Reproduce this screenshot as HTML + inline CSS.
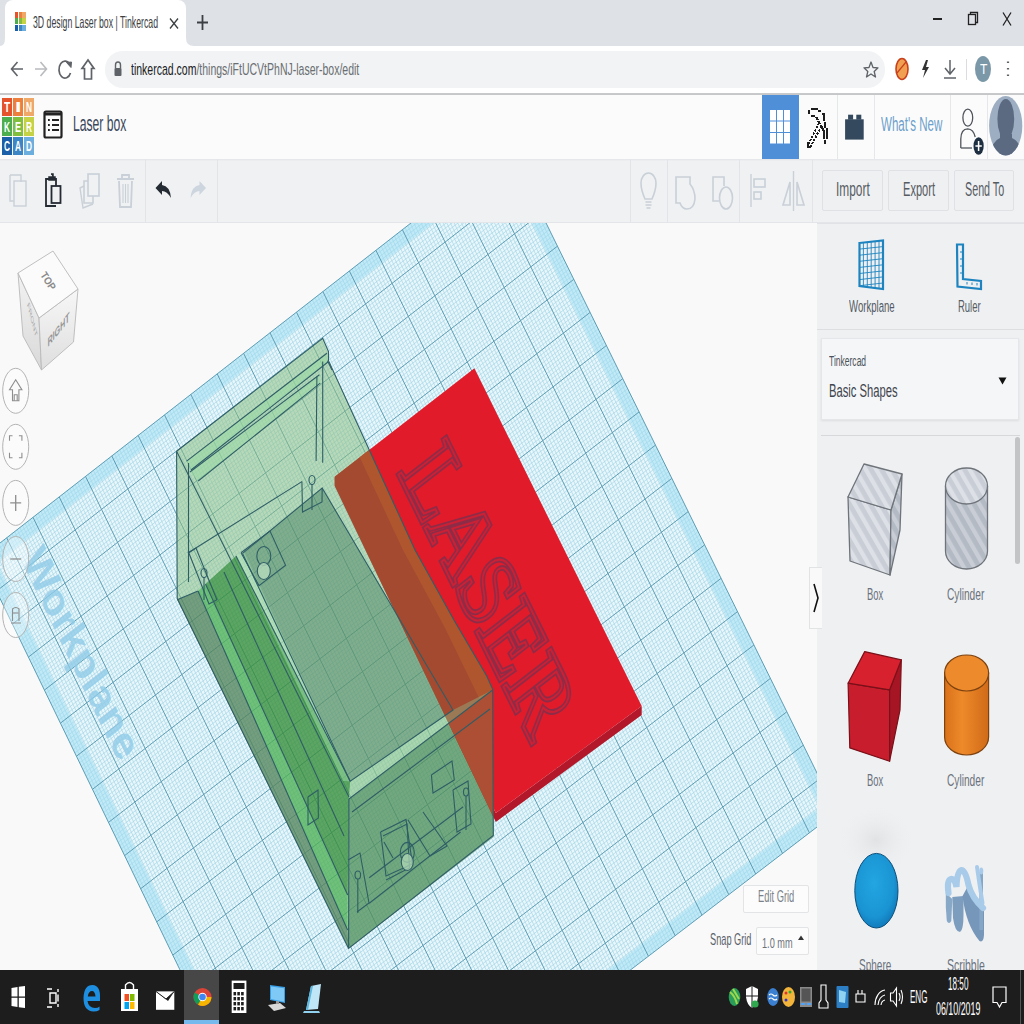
<!DOCTYPE html><html><head><meta charset="utf-8"><style>
*{margin:0;padding:0;box-sizing:border-box}
html,body{width:1024px;height:1024px;overflow:hidden;background:#fff;font-family:"Liberation Sans",sans-serif}
.a{position:absolute}
.t{position:absolute;white-space:nowrap;transform-origin:0 0}
svg{position:absolute;overflow:hidden}
</style></head><body>
<div class="a" style="left:0;top:0;width:1024px;height:46px;background:#dee1e6"></div><div class="a" style="left:5px;top:0;width:181px;height:46px;background:#fff;border-radius:8px 8px 0 0"></div><svg style="left:0;top:30px" width="200" height="16" viewBox="0 30 200 16"><path d="M0 46 Q5 46 5 38 L5 46Z" fill="#fff"/><path d="M186 38 Q186 46 194 46 L186 46Z" fill="#fff"/></svg><div class="a" style="left:15.0px;top:12.0px;width:3.4px;height:6px;background:#e5532d"></div><div class="a" style="left:18.7px;top:12.0px;width:3.4px;height:6px;background:#ed7f3d"></div><div class="a" style="left:22.4px;top:12.0px;width:3.4px;height:6px;background:#f0a868"></div><div class="a" style="left:15.0px;top:18.4px;width:3.4px;height:6px;background:#4cae4f"></div><div class="a" style="left:18.7px;top:18.4px;width:3.4px;height:6px;background:#82be3d"></div><div class="a" style="left:22.4px;top:18.4px;width:3.4px;height:6px;background:#c5d246"></div><div class="a" style="left:15.0px;top:24.8px;width:3.4px;height:6px;background:#1b5fa8"></div><div class="a" style="left:18.7px;top:24.8px;width:3.4px;height:6px;background:#3d86c6"></div><div class="a" style="left:22.4px;top:24.8px;width:3.4px;height:6px;background:#6caedd"></div><div class="t" style="transform:scaleX(0.5365);left:33px;top:13.72px;font-size:16.28px;line-height:16.28px;color:#3c4043;font-weight:normal;font-family:"Liberation Sans", sans-serif;">3D design Laser box | Tinkercad</div><svg style="left:168px;top:17px" width="12" height="13" viewBox="0 0 12 13"><path d="M2 1.5 L10 11.5 M10 1.5 L2 11.5" stroke="#3c4043" stroke-width="1.3" fill="none"/></svg><svg style="left:196px;top:13px" width="13" height="19" viewBox="0 0 13 19"><path d="M6.5 2 V17 M1 9.5 H12" stroke="#3c4043" stroke-width="1.8" fill="none"/></svg><div class="a" style="left:933px;top:18px;width:9px;height:1.5px;background:#222"></div><svg style="left:966px;top:10px" width="14" height="17" viewBox="0 0 14 17"><rect x="2.5" y="4.5" width="7" height="10" fill="none" stroke="#222" stroke-width="1.3"/><path d="M4.5 4.5 V2.5 H11.5 V12.5 H9.5" fill="none" stroke="#222" stroke-width="1.3"/></svg><svg style="left:1000px;top:10px" width="18" height="18" viewBox="0 0 18 18"><path d="M3 2.5 L11 15.5 M11 2.5 L3 15.5" stroke="#222" stroke-width="1.3" fill="none"/></svg><div class="a" style="left:0;top:46px;width:1024px;height:47px;background:#fff"></div><div class="a" style="left:105px;top:51px;width:780px;height:37px;background:#f1f3f4;border-radius:18px"></div><div class="a" style="left:0;top:93px;width:1024px;height:2px;background:#c8c9cb"></div><svg style="left:8px;top:56px" width="92" height="26" viewBox="0 0 92 26"><path d="M15 13 H4 M9.5 6 L3.5 13 L9.5 20" stroke="#5f6368" stroke-width="1.6" fill="none"/><path d="M27 13 H38 M32.5 6 L38.5 13 L32.5 20" stroke="#b9bbbe" stroke-width="1.6" fill="none"/><path d="M62 9 A6 8.5 0 1 0 62.5 17" stroke="#5f6368" stroke-width="1.7" fill="none"/><path d="M58.5 6.5 L63.5 6 L63 11.5Z" fill="#5f6368" stroke="#5f6368" stroke-width="1"/><path d="M80 4 L74 12.5 H76.5 V23 H83.5 V12.5 H86Z" stroke="#5f6368" stroke-width="1.7" fill="none" stroke-linejoin="miter"/></svg><svg style="left:113px;top:60px" width="10" height="18" viewBox="0 0 10 18"><path d="M2.5 8 V5 A2.5 3 0 0 1 7.5 5 V8" stroke="#5f6368" stroke-width="1.4" fill="none"/><rect x="1.5" y="8" width="7" height="8" rx="1" fill="#5f6368"/></svg><div class="t" style="transform:scaleX(0.6129);left:131px;top:61.48px;font-size:17.15px;line-height:17.15px;color:#202124;font-weight:normal;font-family:"Liberation Sans", sans-serif;">tinkercad.com<span style="color:#6a6e72">/things/iFtUCVtPhNJ-laser-box/edit</span></div><svg style="left:863px;top:60px" width="16" height="19" viewBox="0 0 16 19"><path d="M8 2 L10 7.5 L15 7.8 L11.2 11.5 L12.5 17 L8 14 L3.5 17 L4.8 11.5 L1 7.8 L6 7.5Z" stroke="#5f6368" stroke-width="1.3" fill="none" stroke-linejoin="round"/></svg><svg style="left:893px;top:56px" width="125" height="28" viewBox="0 0 125 28"><ellipse cx="9" cy="13" rx="6" ry="10.5" fill="#f0a050" stroke="#c8401c" stroke-width="1.6"/><path d="M4 17 L13 6" stroke="#c8401c" stroke-width="1.2"/><path d="M33 4 L29 14 H32 L30 22 L36 11 H33 L35 4Z" fill="#333"/><path d="M57 4 V17 M52 12 L57 18 L62 12 M51 22 H63" stroke="#5f6368" stroke-width="1.5" fill="none"/><path d="M73.5 3 V24" stroke="#dadce0" stroke-width="1"/><ellipse cx="90" cy="13" rx="8" ry="13" fill="#7b98a8"/><path d="M115 5.5 v1.5 M115 12 v1.5 M115 18.5 v1.5" stroke="#5f6368" stroke-width="2.2"/></svg><div class="t" style="transform:scaleX(0.8750);left:979.5px;top:63.31px;font-size:13.81px;line-height:13.81px;color:#ffffff;font-weight:normal;font-family:"Liberation Sans", sans-serif;">T</div><div class="a" style="left:0;top:95px;width:1024px;height:64px;background:#fbfbfb;box-shadow:0 1px 2px rgba(0,0,0,0.12)"></div><div class="a" style="left:1.8px;top:97.5px;width:10.2px;height:18.6px;background:#e5532d"></div><div class="t" style="transform:scaleX(0.6667);left:4.0px;top:99.18px;font-size:15.26px;line-height:15.26px;color:#fff;font-weight:bold;font-family:"Liberation Sans", sans-serif;">T</div><div class="a" style="left:12.8px;top:97.5px;width:10.2px;height:18.6px;background:#ed7f3d"></div><div class="t" style="transform:scaleX(1.5000);left:15.0px;top:99.18px;font-size:15.26px;line-height:15.26px;color:#fff;font-weight:bold;font-family:"Liberation Sans", sans-serif;">I</div><div class="a" style="left:23.8px;top:97.5px;width:10.2px;height:18.6px;background:#f0a868"></div><div class="t" style="transform:scaleX(0.5455);left:26.0px;top:99.18px;font-size:15.26px;line-height:15.26px;color:#fff;font-weight:bold;font-family:"Liberation Sans", sans-serif;">N</div><div class="a" style="left:1.8px;top:117.0px;width:10.2px;height:18.6px;background:#4cae4f"></div><div class="t" style="transform:scaleX(0.5455);left:4.0px;top:118.68px;font-size:15.26px;line-height:15.26px;color:#fff;font-weight:bold;font-family:"Liberation Sans", sans-serif;">K</div><div class="a" style="left:12.8px;top:117.0px;width:10.2px;height:18.6px;background:#82be3d"></div><div class="t" style="transform:scaleX(0.6000);left:15.0px;top:118.68px;font-size:15.26px;line-height:15.26px;color:#fff;font-weight:bold;font-family:"Liberation Sans", sans-serif;">E</div><div class="a" style="left:23.8px;top:117.0px;width:10.2px;height:18.6px;background:#c5d246"></div><div class="t" style="transform:scaleX(0.5455);left:26.0px;top:118.68px;font-size:15.26px;line-height:15.26px;color:#fff;font-weight:bold;font-family:"Liberation Sans", sans-serif;">R</div><div class="a" style="left:1.8px;top:136.5px;width:10.2px;height:18.6px;background:#1b5fa8"></div><div class="t" style="transform:scaleX(0.5455);left:4.0px;top:138.18px;font-size:15.26px;line-height:15.26px;color:#fff;font-weight:bold;font-family:"Liberation Sans", sans-serif;">C</div><div class="a" style="left:12.8px;top:136.5px;width:10.2px;height:18.6px;background:#3d86c6"></div><div class="t" style="transform:scaleX(0.5455);left:15.0px;top:138.18px;font-size:15.26px;line-height:15.26px;color:#fff;font-weight:bold;font-family:"Liberation Sans", sans-serif;">A</div><div class="a" style="left:23.8px;top:136.5px;width:10.2px;height:18.6px;background:#6caedd"></div><div class="t" style="transform:scaleX(0.5455);left:26.0px;top:138.18px;font-size:15.26px;line-height:15.26px;color:#fff;font-weight:bold;font-family:"Liberation Sans", sans-serif;">D</div><svg style="left:43px;top:110px" width="21" height="30" viewBox="0 0 21 30"><rect x="1.5" y="1.5" width="17" height="26" rx="1.5" fill="none" stroke="#222" stroke-width="2.2"/><path d="M1.5 4 H18.5" stroke="#222" stroke-width="3"/><path d="M5 10 h1.8 M9 10 h7 M5 15 h1.8 M9 15 h7 M5 20 h1.8 M9 20 h7" stroke="#222" stroke-width="2.2"/></svg><div class="t" style="transform:scaleX(0.5573);left:72.5px;top:113.24px;font-size:21.80px;line-height:21.80px;color:#3a475a;font-weight:normal;font-family:"Liberation Sans", sans-serif;">Laser box</div><div class="a" style="left:762px;top:95px;width:36.5px;height:64px;background:#4f8fd8"></div><svg style="left:769px;top:109px" width="23" height="36" viewBox="0 0 23 36"><rect x="1.0" y="1.0" width="6" height="10.5" fill="#fff"/><rect x="8.0" y="1.0" width="6" height="10.5" fill="#fff"/><rect x="15.0" y="1.0" width="6" height="10.5" fill="#fff"/><rect x="1.0" y="12.5" width="6" height="10.5" fill="#fff"/><rect x="8.0" y="12.5" width="6" height="10.5" fill="#fff"/><rect x="15.0" y="12.5" width="6" height="10.5" fill="#fff"/><rect x="1.0" y="24.0" width="6" height="10.5" fill="#fff"/><rect x="8.0" y="24.0" width="6" height="10.5" fill="#fff"/><rect x="15.0" y="24.0" width="6" height="10.5" fill="#fff"/></svg><div class="a" style="left:836.5px;top:95px;width:1px;height:64px;background:#e6e7e9"></div><div class="a" style="left:873.5px;top:95px;width:1px;height:64px;background:#e6e7e9"></div><div class="a" style="left:950px;top:95px;width:1px;height:64px;background:#e6e7e9"></div><div class="a" style="left:987px;top:95px;width:1px;height:64px;background:#e6e7e9"></div><svg style="left:798px;top:98px" width="38" height="60" viewBox="798 98 38 60" shape-rendering="crispEdges"><path d="M810.5 108.5 H817.5 M818 111 H821 M821.5 113.5 H823.5 L823.5 120.5 M824.5 121.5 V127.5 M826.5 128 V139 M825 139.5 V143.5" stroke="#1d1d1d" stroke-width="2" fill="none"/><path d="M808.5 110 V114 M810.5 115.5 H815 M816 117 L818 120 M818 121 L820 124 M821 125 L823.5 130.5 V138.5" stroke="#1d1d1d" stroke-width="2" fill="none"/><path d="M819 123 L807.5 146" stroke="#1d1d1d" stroke-width="1.9" stroke-dasharray="2.2 1.4" fill="none"/><path d="M821.5 126 L810 148" stroke="#1d1d1d" stroke-width="1.9" stroke-dasharray="2.2 1.4" fill="none"/><path d="M808 142 L807.5 147 L811 147" stroke="#1d1d1d" stroke-width="1.8" fill="none"/></svg><svg style="left:840px;top:110px" width="30" height="36" viewBox="840 110 30 36"><rect x="845.1" y="119.3" width="18.6" height="20.3" fill="#34495e"/><rect x="848.1" y="114.7" width="5" height="5" fill="#34495e"/><rect x="856.3" y="114.7" width="5" height="5" fill="#34495e"/></svg><div class="t" style="transform:scaleX(0.5981);left:880.8px;top:115.44px;font-size:19.33px;line-height:19.33px;color:#6d9fcc;font-weight:normal;font-family:"Liberation Sans", sans-serif;">What&#39;s New</div><svg style="left:950px;top:96px" width="74" height="62" viewBox="950 96 74 62"><ellipse cx="967.8" cy="117.7" rx="4.9" ry="8.5" fill="none" stroke="#50555c" stroke-width="1.3"/><path d="M960.8 148 V139 Q961 128.8 967.7 128.8 Q973.5 129 975.2 137" fill="none" stroke="#50555c" stroke-width="1.3"/><path d="M960.8 148 H972" stroke="#50555c" stroke-width="1.3"/><ellipse cx="978.6" cy="146" rx="5.1" ry="8.7" fill="#1f2f42"/><path d="M978.6 141 V151 M975.4 146 H981.8" stroke="#fff" stroke-width="1.5"/><defs><clipPath id="av"><ellipse cx="1005.7" cy="125.7" rx="16.6" ry="29.7"/></clipPath></defs><ellipse cx="1005.7" cy="125.7" rx="16.6" ry="29.7" fill="#9dadc2"/><g clip-path="url(#av)" fill="#5b6a80"><ellipse cx="1005.8" cy="119" rx="8.4" ry="20"/><path d="M1000 134 L1000 138 Q990 142 990 160 H1022 Q1022 142 1012 138 L1012 134Z"/></g></svg><div class="a" style="left:0;top:159px;width:1024px;height:64px;background:#f0f1f3"></div><div class="a" style="left:0;top:159px;width:1024px;height:2px;background:linear-gradient(#e2e4e7,#f0f1f3)"></div><div class="a" style="left:0;top:222px;width:1024px;height:1px;background:#e3e5e8"></div><div class="a" style="left:145px;top:159px;width:1px;height:64px;background:#e2e4e7"></div><div class="a" style="left:217px;top:159px;width:1px;height:64px;background:#e2e4e7"></div><div class="a" style="left:630.3px;top:159px;width:1px;height:64px;background:#e2e4e7"></div><div class="a" style="left:666.8px;top:159px;width:1px;height:64px;background:#e2e4e7"></div><div class="a" style="left:739.4px;top:159px;width:1px;height:64px;background:#e2e4e7"></div><div class="a" style="left:811.8px;top:159px;width:1px;height:64px;background:#e2e4e7"></div><svg style="left:0;top:159px" width="820" height="64" viewBox="0 159 820 64"><path d="M10 175 H21 V182 M10 175 V201 H14" stroke="#c9d0d8" stroke-width="1.4" fill="none"/><rect x="14" y="181" width="12" height="25" fill="none" stroke="#c9d0d8" stroke-width="1.4"/><path d="M52 179 H46 V206 H56" stroke="#252b33" stroke-width="1.8" fill="none"/><path d="M52 179 H56 V186" stroke="#252b33" stroke-width="1.8" fill="none"/><path d="M49 177 H55 V180 H49Z M51 174 H53 V177" stroke="#252b33" stroke-width="1.5" fill="#252b33"/><rect x="51.5" y="186" width="9" height="17" fill="none" stroke="#252b33" stroke-width="1.8"/><rect x="88" y="174" width="11" height="22" fill="none" stroke="#c9d0d8" stroke-width="1.6"/><path d="M88 181 H84 V203 H93 V196" stroke="#c9d0d8" stroke-width="1.6" fill="none"/><path d="M84 186 L80 188 L83 208 L93 204" stroke="#c9d0d8" stroke-width="1.4" fill="none"/><path d="M117 179 H134 M122 179 V175 H129 V179" stroke="#c9d0d8" stroke-width="1.8" fill="none"/><path d="M119 181 L120 207 H131 L132 181" stroke="#c9d0d8" stroke-width="1.8" fill="none"/><path d="M123 184 V203 M125.5 184 V203 M128 184 V203" stroke="#c9d0d8" stroke-width="1.1"/><path d="M155.5 188 L162 181 V185 Q170 186 171 198 Q167 191 162 191 V195Z" fill="#252b33"/><path d="M206 188 L199.5 181 V185 Q191.5 186 190.5 198 Q194.5 191 199.5 191 V195Z" fill="#cdd5de"/><path d="M645 199 Q641 190 641 183 A7.5 10 0 0 1 656 183 Q656 190 652 199Z" stroke="#c9d0d8" stroke-width="1.6" fill="none"/><path d="M645.5 202 H651.5 M645.5 205 H651.5 M646.5 208 H650.5" stroke="#c9d0d8" stroke-width="1.3"/><path d="M676 177 H690 V184 Q695 190 695 199 Q694 209 687 209 Q682 209 680 203 H676Z" stroke="#c9d0d8" stroke-width="1.6" fill="none"/><path d="M724 186 V177 H713 V201 H719" stroke="#c9d0d8" stroke-width="1.6" fill="none"/><ellipse cx="726" cy="198" rx="6.5" ry="11" stroke="#c9d0d8" stroke-width="1.6" fill="none"/><path d="M751 174 V207" stroke="#c9d0d8" stroke-width="1.4"/><rect x="754" y="179" width="11" height="8" fill="none" stroke="#c9d0d8" stroke-width="1.6"/><rect x="754" y="192" width="7" height="7" fill="none" stroke="#c9d0d8" stroke-width="1.6"/><path d="M793.5 171 V211" stroke="#c9d0d8" stroke-width="1.4"/><path d="M790 182 L783 205 H790Z M797 182 L804 205 H797Z" stroke="#c9d0d8" stroke-width="1.6" fill="none"/></svg><div class="a" style="left:822.4px;top:169.8px;width:60.3px;height:41px;background:#eff0f2;border:1px solid #dfe1e4;border-radius:2px"></div><div class="t" style="transform:scaleX(0.5810);left:835.7px;top:179.05px;font-size:20.49px;line-height:20.49px;color:#575c63;font-weight:normal;font-family:"Liberation Sans", sans-serif;">Import</div><div class="a" style="left:887.5px;top:169.8px;width:61.0px;height:41px;background:#eff0f2;border:1px solid #dfe1e4;border-radius:2px"></div><div class="t" style="transform:scaleX(0.5407);left:902.6px;top:179.05px;font-size:20.49px;line-height:20.49px;color:#575c63;font-weight:normal;font-family:"Liberation Sans", sans-serif;">Export</div><div class="a" style="left:953.9px;top:169.8px;width:60.5px;height:41px;background:#eff0f2;border:1px solid #dfe1e4;border-radius:2px"></div><div class="t" style="transform:scaleX(0.5240);left:964.5px;top:179.05px;font-size:20.49px;line-height:20.49px;color:#575c63;font-weight:normal;font-family:"Liberation Sans", sans-serif;">Send To</div><div class="a" style="left:0;top:223px;width:817px;height:748px;background:#f9f9f9"></div><svg style="left:0;top:223px" width="817" height="748" viewBox="0 223 817 748"><polygon points="508.6,147.0 836.3,812.2 302.0,1221.7 -19.5,558.2" fill="#e8f7fb"/><path d="M510.2 150.3L-17.9 561.5M505.9 149.1L833.6 814.3M511.9 153.6L-16.3 564.8M503.3 151.1L830.9 816.3M513.5 156.9L-14.7 568.1M500.6 153.2L828.2 818.4M515.1 160.2L-13.1 571.4M498.0 155.3L825.5 820.4M516.7 163.5L-11.5 574.7M495.3 157.4L822.8 822.5M518.4 166.8L-9.9 578.0M492.6 159.4L820.2 824.6M520.0 170.1L-8.3 581.3M490.0 161.5L817.5 826.6M521.6 173.4L-6.7 584.6M487.3 163.6L814.8 828.7M523.2 176.7L-5.1 587.8M484.7 165.6L812.1 830.8M526.5 183.3L-1.9 594.4M479.4 169.8L806.7 834.9M528.1 186.6L-0.3 597.7M476.7 171.8L804.0 836.9M529.8 189.9L1.3 601.0M474.0 173.9L801.3 839.0M531.4 193.2L2.9 604.3M471.4 176.0L798.7 841.1M533.0 196.6L4.4 607.6M468.7 178.0L796.0 843.1M534.6 199.9L6.0 610.9M466.1 180.1L793.3 845.2M536.3 203.2L7.6 614.2M463.4 182.2L790.6 847.2M537.9 206.5L9.2 617.5M460.8 184.2L787.9 849.3M539.5 209.8L10.8 620.8M458.1 186.3L785.2 851.4M542.8 216.4L14.0 627.4M452.8 190.4L779.8 855.5M544.4 219.7L15.6 630.7M450.1 192.5L777.2 857.5M546.0 223.0L17.2 634.0M447.5 194.6L774.5 859.6M547.7 226.3L18.8 637.3M444.8 196.7L771.8 861.6M549.3 229.6L20.4 640.6M442.2 198.7L769.1 863.7M550.9 232.9L22.0 643.9M439.5 200.8L766.4 865.8M552.6 236.2L23.6 647.2M436.9 202.9L763.7 867.8M554.2 239.5L25.2 650.5M434.2 204.9L761.0 869.9M555.8 242.8L26.8 653.8M431.6 207.0L758.4 871.9M559.1 249.5L30.0 660.4M426.3 211.1L753.0 876.1M560.7 252.8L31.6 663.7M423.6 213.2L750.3 878.1M562.3 256.1L33.2 667.0M420.9 215.2L747.6 880.2M564.0 259.4L34.8 670.3M418.3 217.3L744.9 882.2M565.6 262.7L36.4 673.6M415.6 219.4L742.2 884.3M567.2 266.0L38.0 676.9M413.0 221.4L739.6 886.3M568.9 269.3L39.6 680.2M410.3 223.5L736.9 888.4M570.5 272.6L41.2 683.5M407.7 225.6L734.2 890.5M572.1 275.9L42.8 686.8M405.0 227.6L731.5 892.5M575.4 282.6L46.0 693.4M399.7 231.8L726.1 896.6M577.0 285.9L47.6 696.7M397.1 233.8L723.5 898.7M578.6 289.2L49.2 700.0M394.4 235.9L720.8 900.7M580.3 292.5L50.8 703.3M391.8 238.0L718.1 902.8M581.9 295.8L52.4 706.6M389.1 240.0L715.4 904.8M583.5 299.1L54.0 709.9M386.5 242.1L712.7 906.9M585.2 302.4L55.6 713.3M383.8 244.2L710.1 909.0M586.8 305.8L57.2 716.6M381.2 246.2L707.4 911.0M588.4 309.1L58.8 719.9M378.5 248.3L704.7 913.1M591.7 315.7L62.0 726.5M373.2 252.4L699.3 917.2M593.3 319.0L63.6 729.8M370.6 254.5L696.6 919.2M595.0 322.3L65.2 733.1M367.9 256.5L694.0 921.3M596.6 325.6L66.8 736.4M365.3 258.6L691.3 923.3M598.2 329.0L68.4 739.7M362.6 260.7L688.6 925.4M599.9 332.3L70.0 743.0M360.0 262.7L685.9 927.4M601.5 335.6L71.6 746.3M357.3 264.8L683.2 929.5M603.1 338.9L73.3 749.6M354.7 266.8L680.6 931.6M604.8 342.2L74.9 752.9M352.0 268.9L677.9 933.6M608.0 348.8L78.1 759.5M346.7 273.0L672.5 937.7M609.7 352.2L79.7 762.8M344.1 275.1L669.9 939.8M611.3 355.5L81.3 766.2M341.4 277.2L667.2 941.8M612.9 358.8L82.9 769.5M338.8 279.2L664.5 943.9M614.6 362.1L84.5 772.8M336.1 281.3L661.8 945.9M616.2 365.4L86.1 776.1M333.5 283.3L659.1 948.0M617.8 368.8L87.7 779.4M330.9 285.4L656.5 950.0M619.5 372.1L89.3 782.7M328.2 287.5L653.8 952.1M621.1 375.4L90.9 786.0M325.6 289.5L651.1 954.1M624.4 382.0L94.1 792.6M320.3 293.6L645.8 958.2M626.0 385.3L95.7 795.9M317.6 295.7L643.1 960.3M627.7 388.7L97.3 799.3M315.0 297.8L640.4 962.3M629.3 392.0L98.9 802.6M312.3 299.8L637.7 964.4M630.9 395.3L100.5 805.9M309.7 301.9L635.0 966.4M632.6 398.6L102.1 809.2M307.0 303.9L632.4 968.5M634.2 401.9L103.7 812.5M304.4 306.0L629.7 970.5M635.8 405.3L105.3 815.8M301.8 308.1L627.0 972.6M637.5 408.6L106.9 819.1M299.1 310.1L624.3 974.6M640.7 415.2L110.1 825.7M293.8 314.2L619.0 978.8M642.4 418.5L111.7 829.1M291.2 316.3L616.3 980.8M644.0 421.9L113.4 832.4M288.5 318.4L613.6 982.9M645.6 425.2L115.0 835.7M285.9 320.4L611.0 984.9M647.3 428.5L116.6 839.0M283.2 322.5L608.3 987.0M648.9 431.8L118.2 842.3M280.6 324.5L605.6 989.0M650.6 435.2L119.8 845.6M278.0 326.6L602.9 991.0M652.2 438.5L121.4 848.9M275.3 328.6L600.3 993.1M653.8 441.8L123.0 852.3M272.7 330.7L597.6 995.1M657.1 448.5L126.2 858.9M267.4 334.8L592.3 999.2M658.7 451.8L127.8 862.2M264.7 336.9L589.6 1001.3M660.4 455.1L129.4 865.5M262.1 338.9L586.9 1003.3M662.0 458.4L131.0 868.8M259.5 341.0L584.2 1005.4M663.7 461.7L132.6 872.2M256.8 343.0L581.6 1007.4M665.3 465.1L134.2 875.5M254.2 345.1L578.9 1009.5M666.9 468.4L135.8 878.8M251.5 347.2L576.2 1011.5M668.6 471.7L137.4 882.1M248.9 349.2L573.5 1013.6M670.2 475.0L139.1 885.4M246.3 351.3L570.9 1015.6M673.5 481.7L142.3 892.1M241.0 355.4L565.5 1019.7M675.1 485.0L143.9 895.4M238.3 357.4L562.9 1021.8M676.8 488.4L145.5 898.7M235.7 359.5L560.2 1023.8M678.4 491.7L147.1 902.0M233.1 361.5L557.5 1025.9M680.0 495.0L148.7 905.3M230.4 363.6L554.8 1027.9M681.7 498.3L150.3 908.6M227.8 365.7L552.2 1030.0M683.3 501.7L151.9 912.0M225.1 367.7L549.5 1032.0M685.0 505.0L153.5 915.3M222.5 369.8L546.8 1034.1M686.6 508.3L155.1 918.6M219.9 371.8L544.2 1036.1M689.9 515.0L158.4 925.2M214.6 375.9L538.8 1040.2M691.5 518.3L160.0 928.6M211.9 378.0L536.2 1042.2M693.2 521.6L161.6 931.9M209.3 380.0L533.5 1044.3M694.8 525.0L163.2 935.2M206.7 382.1L530.8 1046.3M696.4 528.3L164.8 938.5M204.0 384.1L528.1 1048.4M698.1 531.6L166.4 941.8M201.4 386.2L525.5 1050.4M699.7 535.0L168.0 945.2M198.8 388.3L522.8 1052.5M701.4 538.3L169.6 948.5M196.1 390.3L520.1 1054.5M703.0 541.6L171.2 951.8M193.5 392.4L517.5 1056.6M706.3 548.3L174.4 958.5M188.2 396.5L512.1 1060.6M707.9 551.6L176.1 961.8M185.6 398.5L509.5 1062.7M709.6 554.9L177.7 965.1M182.9 400.6L506.8 1064.7M711.2 558.3L179.3 968.4M180.3 402.6L504.1 1066.8M712.8 561.6L180.9 971.7M177.7 404.7L501.5 1068.8M714.5 564.9L182.5 975.1M175.0 406.7L498.8 1070.9M716.1 568.3L184.1 978.4M172.4 408.8L496.1 1072.9M717.8 571.6L185.7 981.7M169.8 410.8L493.5 1075.0M719.4 574.9L187.3 985.0M167.1 412.9L490.8 1077.0M722.7 581.6L190.6 991.7M161.9 417.0L485.5 1081.1M724.3 584.9L192.2 995.0M159.2 419.0L482.8 1083.1M726.0 588.3L193.8 998.3M156.6 421.1L480.1 1085.2M727.6 591.6L195.4 1001.7M153.9 423.1L477.5 1087.2M729.3 594.9L197.0 1005.0M151.3 425.2L474.8 1089.3M730.9 598.3L198.6 1008.3M148.7 427.2L472.1 1091.3M732.6 601.6L200.2 1011.6M146.0 429.3L469.5 1093.3M734.2 604.9L201.8 1015.0M143.4 431.3L466.8 1095.4M735.8 608.3L203.4 1018.3M140.8 433.4L464.2 1097.4M739.1 614.9L206.7 1025.0M135.5 437.5L458.8 1101.5M740.8 618.3L208.3 1028.3M132.9 439.5L456.2 1103.5M742.4 621.6L209.9 1031.6M130.2 441.6L453.5 1105.6M744.1 625.0L211.5 1034.9M127.6 443.6L450.8 1107.6M745.7 628.3L213.1 1038.3M125.0 445.7L448.2 1109.7M747.3 631.6L214.7 1041.6M122.4 447.7L445.5 1111.7M749.0 635.0L216.3 1044.9M119.7 449.8L442.9 1113.7M750.6 638.3L218.0 1048.3M117.1 451.8L440.2 1115.8M752.3 641.6L219.6 1051.6M114.5 453.9L437.5 1117.8M755.6 648.3L222.8 1058.2M109.2 458.0L432.2 1121.9M757.2 651.7L224.4 1061.6M106.6 460.0L429.5 1124.0M758.9 655.0L226.0 1064.9M103.9 462.1L426.9 1126.0M760.5 658.3L227.6 1068.2M101.3 464.1L424.2 1128.0M762.1 661.7L229.3 1071.6M98.7 466.2L421.6 1130.1M763.8 665.0L230.9 1074.9M96.0 468.2L418.9 1132.1M765.4 668.4L232.5 1078.2M93.4 470.3L416.2 1134.1M767.1 671.7L234.1 1081.6M90.8 472.3L413.6 1136.2M768.7 675.0L235.7 1084.9M88.2 474.4L410.9 1138.2M772.0 681.7L238.9 1091.6M82.9 478.5L405.6 1142.3M773.7 685.1L240.6 1094.9M80.3 480.5L402.9 1144.3M775.3 688.4L242.2 1098.2M77.6 482.6L400.3 1146.4M777.0 691.7L243.8 1101.6M75.0 484.6L397.6 1148.4M778.6 695.1L245.4 1104.9M72.4 486.7L395.0 1150.5M780.2 698.4L247.0 1108.2M69.8 488.7L392.3 1152.5M781.9 701.8L248.6 1111.6M67.1 490.8L389.6 1154.5M783.5 705.1L250.2 1114.9M64.5 492.8L387.0 1156.6M785.2 708.5L251.9 1118.2M61.9 494.8L384.3 1158.6M788.5 715.1L255.1 1124.9M56.6 498.9L379.0 1162.7M790.1 718.5L256.7 1128.2M54.0 501.0L376.3 1164.7M791.8 721.8L258.3 1131.6M51.4 503.0L373.7 1166.8M793.4 725.2L259.9 1134.9M48.7 505.1L371.0 1168.8M795.1 728.5L261.6 1138.2M46.1 507.1L368.4 1170.8M796.7 731.9L263.2 1141.6M43.5 509.2L365.7 1172.9M798.4 735.2L264.8 1144.9M40.9 511.2L363.1 1174.9M800.0 738.5L266.4 1148.2M38.2 513.3L360.4 1176.9M801.7 741.9L268.0 1151.6M35.6 515.3L357.7 1179.0M805.0 748.6L271.3 1158.2M30.3 519.4L352.4 1183.0M806.6 751.9L272.9 1161.6M27.7 521.4L349.8 1185.1M808.3 755.3L274.5 1164.9M25.1 523.5L347.1 1187.1M809.9 758.6L276.1 1168.3M22.5 525.5L344.5 1189.2M811.6 762.0L277.7 1171.6M19.8 527.6L341.8 1191.2M813.2 765.3L279.3 1174.9M17.2 529.6L339.2 1193.2M814.9 768.7L281.0 1178.3M14.6 531.6L336.5 1195.3M816.5 772.0L282.6 1181.6M12.0 533.7L333.8 1197.3M818.2 775.4L284.2 1185.0M9.4 535.7L331.2 1199.3M821.4 782.1L287.4 1191.6M4.1 539.8L325.9 1203.4M823.1 785.4L289.0 1195.0M1.5 541.9L323.2 1205.4M824.7 788.8L290.7 1198.3M-1.1 543.9L320.6 1207.5M826.4 792.1L292.3 1201.7M-3.8 545.9L317.9 1209.5M828.0 795.5L293.9 1205.0M-6.4 548.0L315.3 1211.5M829.7 798.8L295.5 1208.3M-9.0 550.0L312.6 1213.6M831.3 802.1L297.1 1211.7M-11.6 552.1L310.0 1215.6M833.0 805.5L298.8 1215.0M-14.3 554.1L307.3 1217.6M834.6 808.8L300.4 1218.4M-16.9 556.2L304.7 1219.7" stroke="#a6d6e6" stroke-width="0.7" fill="none"/><path d="M508.6,147.0 L836.3,812.2 L302.0,1221.7 L-19.5,558.2Z M504.7,167.4 L819.8,807.3 L305.9,1201.3 L-3.5,563.0Z" fill="#9adcf2" fill-opacity="0.5" fill-rule="evenodd"/><path d="M508.6 147.0L-19.5 558.2M508.6 147.0L836.3 812.2M524.9 180.0L-3.5 591.1M482.0 167.7L809.4 832.8M541.2 213.1L12.4 624.1M455.5 188.4L782.5 853.4M557.4 246.2L28.4 657.1M428.9 209.1L755.7 874.0M573.8 279.3L44.4 690.1M402.4 229.7L728.8 894.6M590.1 312.4L60.4 723.2M375.9 250.3L702.0 915.1M606.4 345.5L76.5 756.2M349.4 271.0L675.2 935.7M622.7 378.7L92.5 789.3M322.9 291.6L648.4 956.2M639.1 411.9L108.5 822.4M296.5 312.2L621.7 976.7M655.5 445.1L124.6 855.6M270.0 332.8L594.9 997.2M671.8 478.4L140.7 888.7M243.6 353.3L568.2 1017.7M688.2 511.6L156.7 921.9M217.2 373.9L541.5 1038.1M704.6 544.9L172.8 955.1M190.8 394.4L514.8 1058.6M721.1 578.3L188.9 988.4M164.5 414.9L488.1 1079.0M737.5 611.6L205.1 1021.6M138.1 435.4L461.5 1099.5M753.9 645.0L221.2 1054.9M111.8 455.9L434.9 1119.9M770.4 678.4L237.3 1088.2M85.5 476.4L408.3 1140.3M786.8 711.8L253.5 1121.6M59.2 496.9L381.7 1160.6M803.3 745.2L269.6 1154.9M33.0 517.3L355.1 1181.0M819.8 778.7L285.8 1188.3M6.7 537.8L328.5 1201.4M836.3 812.2L302.0 1221.7M-19.5 558.2L302.0 1221.7" stroke="#5c9db5" stroke-width="1" fill="none"/><text transform="matrix(0.436,0.9,-0.789,0.614,21.0,560.0)" font-family="Liberation Sans" font-size="41" font-weight="bold" fill="#8fcbe8" fill-opacity="0.8" textLength="226" lengthAdjust="spacingAndGlyphs">Workplane</text><path d="M334.7 476.8 L495.8 812.9 L641.7 706.0 L641.7 715.0 L495.8 821.9 L334.7 485.8Z" fill="#b3182a"/><path d="M474.4 368.3 L641.7 706.0 L495.8 812.9 L334.7 476.8Z" fill="#e11b2a"/><g transform="matrix(0.16730,0.33770,-0.13970,0.10850,474.4,368.3)"><text x="215.6" y="665" transform="scale(0.45,1)" font-family="Liberation Serif" font-weight="bold" font-size="520" textLength="1777.8" lengthAdjust="spacingAndGlyphs" fill="none" stroke="#8e2c48" stroke-width="30">LASER</text><text x="215.6" y="665" transform="scale(0.45,1)" font-family="Liberation Serif" font-weight="bold" font-size="520" textLength="1777.8" lengthAdjust="spacingAndGlyphs" fill="none" stroke="#cc2035" stroke-width="11">LASER</text></g><defs><clipPath id="rc"><path d="M474.4 368.3 L641.7 706.0 L641.7 715.0 L495.8 821.9 L334.7 485.8 L334.7 476.8Z"/></clipPath></defs><path d="M176.6 451.2 L322.7 338.3 L328.5 351.6 L328.5 360.7 L369.3 449.9 L415.0 550.0 L453.9 620.0 L486.7 676.0 L492.6 689.0 L493.3 835.5 L348.6 948.5 L177.2 598.5Z" fill="#8abd7c" fill-opacity="0.52"/><path d="M242.5 553.4 L322.2 488.0 L453.0 710.0 L350.2 781.3Z" fill="#3d7958" fill-opacity="0.45"/><path d="M177.2 599.7 L198.0 591.0 L347.6 930.0 L348.6 948.5Z" fill="#336444" fill-opacity="0.5"/><path d="M205.5 584.0 L236.0 556.0 L350.2 781.3 L348.9 799.0 L347.7 895.0Z" fill="#127a1c" fill-opacity="0.55"/><path d="M198.0 591.0 L205.5 584.0 L347.7 895.0 L347.6 930.0Z" fill="#2aa83a" fill-opacity="0.5"/><path d="M236.0 556.0 L244.0 552.0 L350.2 781.3 L343.0 781.0Z" fill="#b0e8b8" fill-opacity="0.4"/><path d="M348.9 799.0 L492.6 690.0 L493.7 837.0 L348.6 948.5Z" fill="#2f7746" fill-opacity="0.5"/><g clip-path="url(#rc)"><path d="M176.6 451.2 L322.7 338.3 L328.5 351.6 L328.5 360.7 L369.3 449.9 L415.0 550.0 L453.9 620.0 L486.7 676.0 L492.6 689.0 L493.3 835.5 L348.6 948.5 L177.2 598.5Z" fill="#a34a30"/><path d="M328.5 360.7 L369.3 449.9 L415.0 550.0 L453.9 620.0 L486.7 676.0 L492.6 689.0 L492.6 720.0 L480.0 700.0 L445.0 628.0 L403.0 550.0 L359.0 455.8 L322.0 372.0Z" fill="#b0562f"/><path d="M348.9 799.0 L492.6 690.0 L493.7 837.0 L348.6 948.5Z" fill="#ad4f35"/></g><path d="M186.6 461.1 L326.9 353.2 L328.0 362.0 L191.0 470.0Z" fill="#9ad8a4" fill-opacity="0.6"/><path d="M350.2 781.3 L453.0 710.0 L492.6 690.0 L348.9 799.0Z" fill="#8fd09a" fill-opacity="0.35"/><path d="M189.9 472.0 L319.4 374.8 L320.2 383.1 L198.2 481.0Z" fill="#9ad8a4" fill-opacity="0.55"/><path d="M176.6 451.2 L322.7 338.3 L328.5 351.6 L328.5 360.7 L369.3 449.9 L415.0 550.0 L453.9 620.0 L486.7 676.0 L492.6 689.0 L493.3 835.5 L348.6 948.5 L177.2 598.5 L176.6 451.2" stroke="#2f5d66" fill="none" stroke-width="1.1"/><path d="M176.6 451.2 L349.0 797.0" stroke="#2f5d66" fill="none" stroke-width="1.1"/><path d="M186.6 461.1 L326.9 353.2" stroke="#2f5d66" fill="none" stroke-width="1.1"/><path d="M191.0 470.0 L328.0 362.0" stroke="#2f5d66" fill="none" stroke-width="1.1"/><path d="M189.9 472.0 L319.4 374.8" stroke="#2f5d66" fill="none" stroke-width="1.1"/><path d="M198.2 481.0 L320.2 383.1" stroke="#2f5d66" fill="none" stroke-width="1.1"/><path d="M316.9 376.5 L316.1 461.1" stroke="#2f5d66" fill="none" stroke-width="1.1"/><path d="M322.7 361.5 L322.7 462.8" stroke="#2f5d66" fill="none" stroke-width="1.1"/><path d="M188.5 463.0 L188.5 582.0" stroke="#2f5d66" fill="none" stroke-width="1.1"/><path d="M348.9 799.0 L348.6 948.0" stroke="#2f5d66" fill="none" stroke-width="1.1"/><path d="M348.9 799.0 L492.6 690.0" stroke="#2f5d66" fill="none" stroke-width="1.1"/><path d="M352.0 812.0 L490.0 709.0" stroke="#2f5d66" fill="none" stroke-width="1.1"/><path d="M187.8 553.0 L301.9 481.6" stroke="#2f5d66" fill="none" stroke-width="1.1"/><path d="M301.9 481.6 L302.5 512.0 L322.0 502.0 L322.2 487.8" stroke="#2f5d66" fill="none" stroke-width="1.1"/><path d="M242.5 553.4 L322.2 488.0 L453.0 710.0 L350.2 781.3 L242.5 553.4" stroke="#2f5d66" fill="none" stroke-width="1.1"/><path d="M198.0 591.0 L347.6 930.0" stroke="#2f5d66" fill="none" stroke-width="1.1"/><path d="M205.5 584.0 L347.7 895.0" stroke="#2f5d66" fill="none" stroke-width="1.1"/><path d="M236.0 556.0 L350.2 781.3" stroke="#2f5d66" fill="none" stroke-width="1.1"/><path d="M177.2 599.7 L198.0 591.0" stroke="#2f5d66" fill="none" stroke-width="1.1"/><path d="M224.0 572.0 L344.0 836.0" stroke="#2f5d66" fill="none" stroke-width="1.1"/><path d="M241.0 552.8 L270.0 531.0 L285.6 565.3 L259.0 585.6 L241.0 552.8" stroke="#2f5d66" fill="none" stroke-width="1.1"/><path d="M188.8 552.8 L196.0 548.0 L216.9 599.7 L209.0 604.0 L188.8 552.8" stroke="#2f5d66" fill="none" stroke-width="1.1"/><path d="M308.0 797.0 L318.0 790.0 L318.4 818.0 L308.0 825.0 L308.0 797.0" stroke="#2f5d66" fill="none" stroke-width="1.1"/><path d="M431.4 775.0 L452.0 761.0 L454.3 780.0 L433.0 793.0 L431.4 775.0" stroke="#2f5d66" fill="none" stroke-width="1.1"/><path d="M453.0 790.0 L468.0 781.0 L471.0 824.0 L457.0 832.0 L453.0 790.0" stroke="#2f5d66" fill="none" stroke-width="1.1"/><path d="M380.6 832.0 L406.0 819.4 L412.4 864.0 L386.0 876.0 L380.6 832.0" stroke="#2f5d66" fill="none" stroke-width="1.1"/><path d="M383.0 836.0 L407.0 824.0 L409.5 868.0 L386.0 880.0" stroke="#2f5d66" fill="none" stroke-width="1.1"/><path d="M384.0 842.0 L393.0 858.0" stroke="#2f5d66" fill="none" stroke-width="1.1"/><path d="M408.0 820.0 L430.0 856.0 L447.0 846.0 L423.0 812.0" stroke="#2f5d66" fill="none" stroke-width="1.1"/><path d="M369.2 903.2 L460.6 832.0" stroke="#2f5d66" fill="none" stroke-width="1.1"/><path d="M369.2 877.8 L463.2 806.7" stroke="#2f5d66" fill="none" stroke-width="1.1"/><path d="M348.0 860.0 L360.0 853.0 L369.0 903.0 L357.0 912.0" stroke="#2f5d66" fill="none" stroke-width="1.1"/><path d="M327.5 360.7 L332.0 370.0" stroke="#2f5d66" fill="none" stroke-width="1.1"/><ellipse cx="263.8" cy="556" rx="7" ry="9.5" fill="none" fill-opacity="0.7" stroke="#2f5d66" stroke-width="1.1"/><ellipse cx="263.8" cy="571" rx="6.5" ry="8.5" fill="#bfe3c3" fill-opacity="0.7" stroke="#2f5d66" stroke-width="1.1"/><ellipse cx="312" cy="480" rx="3" ry="4.5" fill="none" fill-opacity="0.7" stroke="#2f5d66" stroke-width="1.1"/><ellipse cx="407.3" cy="852.4" rx="7" ry="10" fill="none" fill-opacity="0.7" stroke="#2f5d66" stroke-width="1.1"/><ellipse cx="407.3" cy="862" rx="6" ry="8.5" fill="#b5dcb9" fill-opacity="0.7" stroke="#2f5d66" stroke-width="1.1"/><ellipse cx="357.8" cy="875" rx="2.8" ry="4" fill="none" fill-opacity="0.7" stroke="#2f5d66" stroke-width="1.1"/><ellipse cx="466" cy="792" rx="2.5" ry="4" fill="none" fill-opacity="0.7" stroke="#2f5d66" stroke-width="1.1"/><ellipse cx="204" cy="573" rx="3" ry="4.5" fill="none" fill-opacity="0.7" stroke="#2f5d66" stroke-width="1.1"/><path d="M357.8 879.0 L357.8 913.0" stroke="#2f5d66" fill="none" stroke-width="1.1"/><path d="M312.0 484.0 L312.0 510.0" stroke="#2f5d66" fill="none" stroke-width="1.1"/><path d="M466.0 796.0 L466.0 830.0" stroke="#2f5d66" fill="none" stroke-width="1.1"/><path d="M204.0 577.0 L204.0 600.0" stroke="#2f5d66" fill="none" stroke-width="1.1"/><defs><linearGradient id="cr" x1="0" y1="0" x2="0" y2="1"><stop offset="0" stop-color="#f7f7f7"/><stop offset="1" stop-color="#dedede"/></linearGradient><linearGradient id="cl" x1="0" y1="0" x2="0" y2="1"><stop offset="0" stop-color="#f2f2f2"/><stop offset="1" stop-color="#d9d9d9"/></linearGradient></defs><path d="M18.0 273.0 L39.0 318.0 L41.5 370.0 L23.0 336.0Z" fill="url(#cl)" stroke="#b9b9b9" stroke-width="0.9"/><path d="M39.0 318.0 L78.0 289.0 L73.5 342.0 L41.5 370.0Z" fill="url(#cr)" stroke="#b9b9b9" stroke-width="0.9"/><path d="M53.0 251.0 L78.0 289.0 L39.0 318.0 L18.0 273.0Z" fill="#fbfbfb" stroke="#b9b9b9" stroke-width="0.9"/><text transform="matrix(0.55,0.84,-0.84,0.55,40,275)" font-family="Liberation Sans" font-weight="bold" font-size="10.5" fill="#8a8a8a" textLength="19" lengthAdjust="spacingAndGlyphs">TOP</text><text transform="matrix(0.62,-0.78,0.12,0.99,48,347)" font-family="Liberation Sans" font-style="italic" font-weight="bold" font-size="11" fill="#959595" textLength="35" lengthAdjust="spacingAndGlyphs">RIGHT</text><text transform="matrix(0.25,0.97,-0.5,0.87,27,305)" font-family="Liberation Sans" font-size="6" fill="#a5a5a5" textLength="34" lengthAdjust="spacingAndGlyphs">FRONT</text><ellipse cx="15.7" cy="390.8" rx="13" ry="22.5" fill="#ffffff" fill-opacity="0.35" stroke="#b4b4b4" stroke-width="1"/><ellipse cx="15.7" cy="446.8" rx="13" ry="22.5" fill="#ffffff" fill-opacity="0.35" stroke="#b4b4b4" stroke-width="1"/><ellipse cx="15.7" cy="502.9" rx="13" ry="22.5" fill="#ffffff" fill-opacity="0.35" stroke="#b4b4b4" stroke-width="1"/><ellipse cx="15.7" cy="559" rx="13" ry="22.5" fill="#ffffff" fill-opacity="0.35" stroke="#b4b4b4" stroke-width="1"/><ellipse cx="15.7" cy="615" rx="13" ry="22.5" fill="#ffffff" fill-opacity="0.35" stroke="#b4b4b4" stroke-width="1"/><path d="M15.7 379.8 L9.5 389.8 H12.5 V400.8 H18.9 V389.8 H21.9Z" stroke="#8e8e8e" fill="none" stroke-width="1.1"/><path d="M14.2 400.8 V394.8 H17.2 V400.8" stroke="#8e8e8e" fill="none" stroke-width="1.1"/><path d="M9.5 440.8 V435.8 H12.5 M18.9 435.8 H21.9 V440.8 M21.9 452.8 V457.8 H18.9 M12.5 457.8 H9.5 V452.8" stroke="#8e8e8e" fill="none" stroke-width="1.1"/><path d="M15.7 494.9 V510.9 M10.2 502.9 H21.2" stroke="#8e8e8e" stroke-width="1.3"/><path d="M10.2 559 H21.2" stroke="#8e8e8e" stroke-width="1.3"/><path d="M11 623 H21 M12.5 621 V609 Q15.7 606 19 609 V621" stroke="#8e8e8e" fill="none" stroke-width="1.1"/><path d="M13 613 H18.5" stroke="#8e8e8e" fill="none" stroke-width="1.1"/></svg><div class="a" style="left:817px;top:223px;width:207px;height:748px;background:#eff0f2"></div><div class="a" style="left:817px;top:223px;width:207px;height:1px;background:#e0e2e5"></div><div class="a" style="left:817px;top:329px;width:207px;height:1px;background:#dcdee1"></div><div class="a" style="left:821.4px;top:338px;width:198px;height:82px;background:#f5f6f7;border:1px solid #e4e6e9;box-shadow:0 1px 2px rgba(0,0,0,0.08)"></div><div class="a" style="left:821px;top:435px;width:199px;height:1px;background:#d6d8db"></div><svg style="left:856px;top:239px" width="32" height="53" viewBox="0 0 32 53"><path d="M3.5 4 L27 1.5 V50 L3.5 47Z" fill="none" stroke="#1e84c0" stroke-width="2.2"/><path d="M7.4 3.58 V47.50" stroke="#1e84c0" stroke-width="0.9"/><path d="M11.3 3.16 V48.00" stroke="#1e84c0" stroke-width="0.9"/><path d="M15.2 2.74 V48.50" stroke="#1e84c0" stroke-width="0.9"/><path d="M19.1 2.32 V49.00" stroke="#1e84c0" stroke-width="0.9"/><path d="M23.0 1.90 V49.50" stroke="#1e84c0" stroke-width="0.9"/><path d="M3.5 10.1 L27 7.6" stroke="#1e84c0" stroke-width="0.9"/><path d="M3.5 16.2 L27 13.6" stroke="#1e84c0" stroke-width="0.9"/><path d="M3.5 22.3 L27 19.7" stroke="#1e84c0" stroke-width="0.9"/><path d="M3.5 28.4 L27 25.8" stroke="#1e84c0" stroke-width="0.9"/><path d="M3.5 34.5 L27 31.9" stroke="#1e84c0" stroke-width="0.9"/><path d="M3.5 40.6 L27 37.9" stroke="#1e84c0" stroke-width="0.9"/><path d="M3.5 46.7 L27 44.0" stroke="#1e84c0" stroke-width="0.9"/></svg><svg style="left:954px;top:242px" width="32" height="50" viewBox="0 0 32 50"><path d="M3 2.5 H9 V37 L27 39 V47 L3.5 44.5Z" fill="none" stroke="#1e84c0" stroke-width="2.2"/><path d="M6 10 h2 M6 17 h2 M6 24 h2 M6 31 h2 M13 40 v2.5 M18 40.5 v2.5 M23 41 v2.5" stroke="#1e84c0" stroke-width="1"/></svg><div class="t" style="transform:scaleX(0.5687);left:849px;top:299.33px;font-size:16.86px;line-height:16.86px;color:#545b64;font-weight:normal;font-family:"Liberation Sans", sans-serif;">Workplane</div><div class="t" style="transform:scaleX(0.5625);left:958px;top:299.33px;font-size:16.86px;line-height:16.86px;color:#545b64;font-weight:normal;font-family:"Liberation Sans", sans-serif;">Ruler</div><div class="t" style="transform:scaleX(0.5873);left:829px;top:353.70px;font-size:14.53px;line-height:14.53px;color:#4b525a;font-weight:normal;font-family:"Liberation Sans", sans-serif;">Tinkercad</div><div class="t" style="transform:scaleX(0.5948);left:829px;top:382.01px;font-size:18.90px;line-height:18.90px;color:#3e454e;font-weight:normal;font-family:"Liberation Sans", sans-serif;">Basic Shapes</div><svg style="left:997px;top:376px" width="11" height="10" viewBox="0 0 11 10"><path d="M1.5 1.5 H9.5 L5.5 8.5Z" fill="#111"/></svg><div class="a" style="left:1014.6px;top:437px;width:5.5px;height:127px;background:#c3c4c6;border-radius:3px"></div><div class="a" style="left:809.4px;top:567px;width:12.5px;height:62px;background:#f9f9fa;border:1px solid #e2e3e5;border-right:none"></div><svg style="left:810px;top:580px" width="12" height="36" viewBox="0 0 12 36"><path d="M4 4 L8 18 L4 32" stroke="#111" stroke-width="1.6" fill="none"/></svg><svg style="left:817px;top:436px" width="200" height="535" viewBox="817 436 200 535"><defs><pattern id="stg" patternUnits="userSpaceOnUse" width="9" height="9" patternTransform="rotate(-30)"><rect width="9" height="9" fill="#c9ced6"/><rect width="4.2" height="9" fill="#dde1e7"/></pattern><pattern id="stg2" patternUnits="userSpaceOnUse" width="9" height="9" patternTransform="rotate(-30)"><rect width="9" height="9" fill="#b4bac3"/><rect width="4.2" height="9" fill="#c9ced6"/></pattern><radialGradient id="sph" cx="0.45" cy="0.4" r="0.6"><stop offset="0" stop-color="#22a6e2"/><stop offset="0.75" stop-color="#1a94d3"/><stop offset="1" stop-color="#127cbd"/></radialGradient><linearGradient id="cyo" x1="0" x2="1"><stop offset="0" stop-color="#d9711a"/><stop offset="0.4" stop-color="#ee8a2a"/><stop offset="1" stop-color="#d06a18"/></linearGradient><radialGradient id="shd"><stop offset="0" stop-color="#d8d9db"/><stop offset="1" stop-color="#eff0f2" stop-opacity="0"/></radialGradient></defs><path d="M848.0 497.0 L891.0 510.0 L890.0 575.0 L850.0 561.0Z" fill="url(#stg)" stroke="#6f747b" stroke-width="1.3" stroke-linejoin="round"/><path d="M891.0 510.0 L902.0 474.0 L900.0 530.0 L890.0 575.0Z" fill="url(#stg2)" stroke="#6f747b" stroke-width="1.3" stroke-linejoin="round"/><path d="M864.0 464.0 L902.0 474.0 L891.0 510.0 L848.0 497.0Z" fill="url(#stg)" stroke="#6f747b" stroke-width="1.3" stroke-linejoin="round"/><path d="M945.5 486 V551 A21 18 0 0 0 987.5 551 V486Z" fill="url(#stg2)" stroke="#6f747b" stroke-width="1.3" stroke-linejoin="round"/><ellipse cx="966.5" cy="486" rx="21" ry="18" fill="url(#stg)" stroke="#6f747b" stroke-width="1.3" stroke-linejoin="round"/><path d="M848.1 683.2 L889.6 689.8 L889.6 761.2 L849.8 747.9Z" fill="#c81d2c" stroke="#7a1019" stroke-width="1.2" stroke-linejoin="round"/><path d="M889.6 689.8 L901.3 659.9 L900.0 710.0 L889.6 761.2Z" fill="#a61523" stroke="#7a1019" stroke-width="1.2" stroke-linejoin="round"/><path d="M864.7 651.6 L901.3 659.9 L889.6 689.8 L848.1 683.2Z" fill="#d7212f" stroke="#7a1019" stroke-width="1.2" stroke-linejoin="round"/><path d="M944.6 673 V737 A22 18 0 0 0 988.6 737 V673Z" fill="url(#cyo)" stroke="#7d4210" stroke-width="1.2"/><ellipse cx="966.6" cy="673" rx="22" ry="18" fill="#ec8a2c" stroke="#7d4210" stroke-width="1.2"/><ellipse cx="876" cy="840" rx="40" ry="36" fill="url(#shd)" opacity="0.6"/><ellipse cx="876.4" cy="890.7" rx="21.6" ry="37.3" fill="url(#sph)" stroke="#0b4f7a" stroke-width="1"/><path d="M945.8 893 Q945.3 906 946.8 921 Q949 925 951.3 921 L952.3 899Z" fill="#88a8c8"/><path d="M952.3 897 L953 918 Q955 932 960 932 Q963.5 930 963.5 915 L963.5 896Z" fill="#7d9dbf"/><path d="M962.5 896 Q966 925 979.5 941 Q983.5 943 984 935 L984 905 Q975 896 968 886Z" fill="#7797ba"/><path d="M981.2 872 V930" stroke="#86a6c6" stroke-width="3.6"/><path d="M948.5 893 Q946.5 880 951 879 Q955 878.5 956.5 887 Q957 871 961.5 870 Q965.5 870 968.5 885 Q972 898 983 908" stroke="#a9cbea" stroke-width="6.2" fill="none" stroke-linecap="round"/><path d="M977 867 Q979.5 885 982.5 903" stroke="#a9cbea" stroke-width="4" fill="none" stroke-linecap="round"/><ellipse cx="981.3" cy="871" rx="2" ry="3.5" fill="#a9cbea"/></svg><div class="t" style="transform:scaleX(0.5786);left:867.4px;top:585.82px;font-size:16.28px;line-height:16.28px;color:#6a727c;font-weight:normal;font-family:"Liberation Sans", sans-serif;">Box</div><div class="t" style="transform:scaleX(0.6250);left:946.5px;top:585.82px;font-size:16.28px;line-height:16.28px;color:#6a727c;font-weight:normal;font-family:"Liberation Sans", sans-serif;">Cylinder</div><div class="t" style="transform:scaleX(0.5786);left:866.6px;top:772.22px;font-size:16.28px;line-height:16.28px;color:#6a727c;font-weight:normal;font-family:"Liberation Sans", sans-serif;">Box</div><div class="t" style="transform:scaleX(0.6250);left:946.5px;top:772.22px;font-size:16.28px;line-height:16.28px;color:#6a727c;font-weight:normal;font-family:"Liberation Sans", sans-serif;">Cylinder</div><div class="t" style="transform:scaleX(0.6154);left:859px;top:956.72px;font-size:16.28px;line-height:16.28px;color:#6a727c;font-weight:normal;font-family:"Liberation Sans", sans-serif;">Sphere</div><div class="t" style="transform:scaleX(0.6441);left:946.5px;top:956.72px;font-size:16.28px;line-height:16.28px;color:#6a727c;font-weight:normal;font-family:"Liberation Sans", sans-serif;">Scribble</div><div class="a" style="left:742.7px;top:884.5px;width:66px;height:28px;background:#fcfcfc;border:1px solid #e3e4e6;border-radius:2px"></div><div class="t" style="transform:scaleX(0.5687);left:757.7px;top:888.20px;font-size:16.42px;line-height:16.42px;color:#7b8188;font-weight:normal;font-family:"Liberation Sans", sans-serif;">Edit Grid</div><div class="t" style="transform:scaleX(0.5377);left:709.7px;top:931.08px;font-size:17.15px;line-height:17.15px;color:#5b6169;font-weight:normal;font-family:"Liberation Sans", sans-serif;">Snap Grid</div><div class="a" style="left:755.9px;top:926.7px;width:53px;height:28px;background:#fcfcfc;border:1px solid #e3e4e6;border-radius:2px"></div><div class="t" style="transform:scaleX(0.5941);left:761.7px;top:935.26px;font-size:15.41px;line-height:15.41px;color:#6b7179;font-weight:normal;font-family:"Liberation Sans", sans-serif;">1.0 mm</div><svg style="left:797px;top:934px" width="8" height="8" viewBox="0 0 8 8"><path d="M1 6 H7 L4 1.5Z" fill="#333"/></svg><div class="a" style="left:0;top:970px;width:1024px;height:54px;background:#1d1d1d"></div><div class="a" style="left:184.3px;top:970px;width:35px;height:54px;background:#474747"></div><div class="a" style="left:184.3px;top:1020px;width:35px;height:4px;background:#76b9ed"></div><svg style="left:0;top:970px" width="1024" height="54" viewBox="0 970 1024 54"><path d="M11.5 988 L17.5 987 V996.5 H11.5Z M18.8 986.8 L25 986 V996.5 H18.8Z M11.5 997.8 H17.5 V1007 L11.5 1006Z M18.8 997.8 H25 V1008 L18.8 1007.2Z" fill="#ffffff"/><path d="M47 989 H52 M47 1007 H52 M50 993 H56 V1003 H50Z M58 989 V992 M58 994.5 V1001.5 M58 1004 V1007" stroke="#ffffff" stroke-width="1.4" fill="none"/><path d="M99 1001 H87.5 Q88.5 1008 95 1008 Q98 1008 99.5 1006.5 V1010 Q97 1011.5 93.5 1011.5 Q83.5 1011 83.5 998 Q84 985 92.5 985 Q100.5 985.5 100 998 V1001Z M87.8 996.5 H95.5 Q95 991 92 991 Q88.5 991 87.8 996.5Z" fill="#1e8fe0"/><path d="M121 989 H138 V1011 H121Z" fill="#ffffff"/><path d="M125.5 989 V985 Q129.5 980 133.5 985 V989" stroke="#ffffff" stroke-width="1.4" fill="none"/><rect x="124.5" y="994" width="4.5" height="7" fill="#f25022"/><rect x="130" y="994" width="4.5" height="7" fill="#7fba00"/><rect x="124.5" y="1002" width="4.5" height="7" fill="#00a4ef"/><rect x="130" y="1002" width="4.5" height="7" fill="#ffb900"/><path d="M156 991.5 H174.3 V1009.8 H156Z" fill="#ffffff"/><path d="M156 991.5 L168 1001 L174.3 991.5" fill="#1d1d1d"/><path d="M156 991.5 L166 999 L174.3 991.5" fill="#ffffff" stroke="#1d1d1d" stroke-width="1"/><circle cx="202.5" cy="997" r="9" fill="#db4437"/><path d="M202.5 997 L194.7 992.5 A9 9 0 0 0 198 1004.8Z" fill="#0f9d58"/><path d="M202.5 997 L198 1004.8 A9 9 0 0 0 211.5 997 Z" fill="#f4b400"/><circle cx="202.5" cy="997" r="4.2" fill="#ffffff"/><circle cx="202.5" cy="997" r="3.3" fill="#4285f4"/><rect x="231.7" y="980.6" width="14.7" height="32.4" fill="#ffffff"/><rect x="233.5" y="983" width="11" height="6" fill="#1d1d1d"/><rect x="233.5" y="992.0" width="2.6" height="3.4" fill="#1d1d1d"/><rect x="237.3" y="992.0" width="2.6" height="3.4" fill="#1d1d1d"/><rect x="241.1" y="992.0" width="2.6" height="3.4" fill="#1d1d1d"/><rect x="233.5" y="997.0" width="2.6" height="3.4" fill="#1d1d1d"/><rect x="237.3" y="997.0" width="2.6" height="3.4" fill="#1d1d1d"/><rect x="241.1" y="997.0" width="2.6" height="3.4" fill="#1d1d1d"/><rect x="233.5" y="1002.0" width="2.6" height="3.4" fill="#1d1d1d"/><rect x="237.3" y="1002.0" width="2.6" height="3.4" fill="#1d1d1d"/><rect x="241.1" y="1002.0" width="2.6" height="3.4" fill="#1d1d1d"/><rect x="233.5" y="1007.0" width="2.6" height="3.4" fill="#1d1d1d"/><rect x="237.3" y="1007.0" width="2.6" height="3.4" fill="#1d1d1d"/><rect x="241.1" y="1007.0" width="2.6" height="3.4" fill="#1d1d1d"/><path d="M270 985 L285 987 V1003 L270 1000Z" fill="#3aa0e6"/><path d="M271 986.5 L284 988.3 V1001.8 L271 999Z" fill="#7fc9f7"/><path d="M268 1005 L280 1003 L286 1008 L274 1011Z" fill="#d8d8d8"/><rect x="276" y="1001" width="3" height="3" fill="#999"/><path d="M306 1010 L311 986 L321 984 L318 1009Z" fill="#bfe6f6"/><path d="M306 1010 L311 986 L313 986 L308 1010Z" fill="#5ab7df"/><path d="M304 1011 L319 1011 L320 1013 L303 1013Z" fill="#8fd1ee"/><ellipse cx="734.5" cy="997" rx="5.8" ry="9" fill="#2a9d5b"/><path d="M730 992 Q735 996 737 1004 M733 989 L739 999" stroke="#9ed84b" stroke-width="2" fill="none"/><path d="M746 989 L752 986 L758 989 V997 Q757 1005 752 1008 Q747 1005 746 997Z" fill="#ffffff"/><path d="M752 986 V1008 M746 996 H758" stroke="#1d1d1d" stroke-width="1"/><circle cx="755" cy="1004" r="3.6" fill="#2fa84f"/><ellipse cx="773" cy="997" rx="5.8" ry="9" fill="#3b7fd0"/><path d="M769 995 Q771 993 773 995 T777 995 M769 999 Q771 997 773 999 T777 999" stroke="#ffffff" stroke-width="1.1" fill="none"/><ellipse cx="788.5" cy="997" rx="6.5" ry="10" fill="#f2b43a"/><circle cx="786" cy="993" r="1.5" fill="#d33"/><circle cx="790" cy="992" r="1.5" fill="#3a3"/><circle cx="786" cy="1000" r="1.5" fill="#33c"/><rect x="800" y="987" width="12" height="20" fill="#8a8a8a"/><rect x="801.5" y="988.5" width="9" height="13" fill="#555"/><rect x="801" y="1003" width="4" height="2" fill="#4aa3ff"/><rect x="807" y="1003" width="4" height="2" fill="#4aa3ff"/><path d="M821 985 H826 V1000 L828 1003 V1008 H819 V1003 L821 1000Z" fill="none" stroke="#ffffff" stroke-width="1.1"/><rect x="836.5" y="986" width="12" height="22" rx="1" fill="#2c7fc4"/><path d="M839 990 L846 992 L845 1003 L839 1002Z" fill="#8fd3f0"/><path d="M856 994 H865 V1002 H856Z M858 990 V994 M862 990 V994" stroke="#ffffff" stroke-width="1.1" fill="none"/><path d="M875 1005 A11 15 0 0 1 885 990 M878 1005 A8 11 0 0 1 885 995 M881 1005 A5 6 0 0 1 885 1000" stroke="#ffffff" stroke-width="1.1" fill="none"/><path d="M890.5 993 H893 L896.5 988 V1006 L893 1001 H890.5Z M899 993 Q901 997 899 1001 M901 990 Q904 997 901 1004" stroke="#ffffff" stroke-width="1.1" fill="none"/><path d="M993 987 H1006 V1002.5 H1002 L999.5 1007 L997 1002.5 H993Z" stroke="#ffffff" stroke-width="1.2" fill="none"/><rect x="1020" y="970" width="1" height="54" fill="#555"/></svg><div class="t" style="transform:scaleX(0.4682);left:948.4px;top:976.24px;font-size:17.44px;line-height:17.44px;color:#ffffff;font-weight:normal;font-family:"Liberation Sans", sans-serif;">18:50</div><div class="t" style="transform:scaleX(0.4804);left:935.8px;top:999.77px;font-size:18.46px;line-height:18.46px;color:#ffffff;font-weight:normal;font-family:"Liberation Sans", sans-serif;">06/10/2019</div><div class="t" style="transform:scaleX(0.4462);left:909.5px;top:988.14px;font-size:18.02px;line-height:18.02px;color:#ffffff;font-weight:normal;font-family:"Liberation Sans", sans-serif;">ENG</div></body></html>
